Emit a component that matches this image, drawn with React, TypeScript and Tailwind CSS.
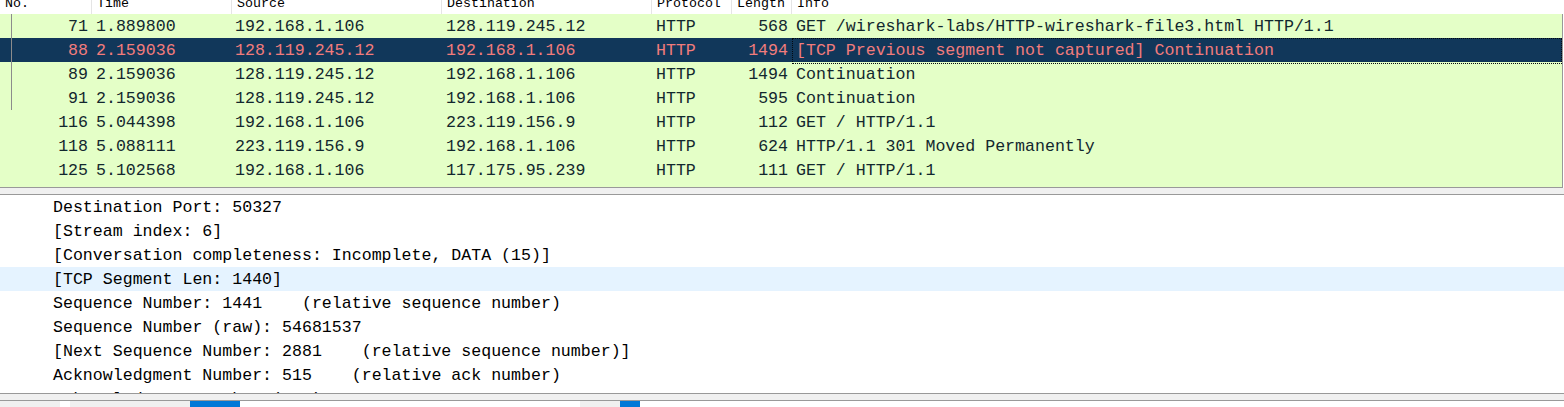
import React from 'react';

type Packet = {
  no: number;
  time: string;
  src: string;
  dst: string;
  proto: string;
  len: number;
  info: string;
  selected?: boolean;
};

const packets: Packet[] = [
  { no: 71, time: '1.889800', src: '192.168.1.106', dst: '128.119.245.12', proto: 'HTTP', len: 568, info: 'GET /wireshark-labs/HTTP-wireshark-file3.html HTTP/1.1' },
  { no: 88, time: '2.159036', src: '128.119.245.12', dst: '192.168.1.106', proto: 'HTTP', len: 1494, info: '[TCP Previous segment not captured] Continuation', selected: true },
  { no: 89, time: '2.159036', src: '128.119.245.12', dst: '192.168.1.106', proto: 'HTTP', len: 1494, info: 'Continuation' },
  { no: 91, time: '2.159036', src: '128.119.245.12', dst: '192.168.1.106', proto: 'HTTP', len: 595, info: 'Continuation' },
  { no: 116, time: '5.044398', src: '192.168.1.106', dst: '223.119.156.9', proto: 'HTTP', len: 112, info: 'GET / HTTP/1.1' },
  { no: 118, time: '5.088111', src: '223.119.156.9', dst: '192.168.1.106', proto: 'HTTP', len: 624, info: 'HTTP/1.1 301 Moved Permanently' },
  { no: 125, time: '5.102568', src: '192.168.1.106', dst: '117.175.95.239', proto: 'HTTP', len: 111, info: 'GET / HTTP/1.1' },
];

const details = [
  'Destination Port: 50327',
  '[Stream index: 6]',
  '[Conversation completeness: Incomplete, DATA (15)]',
  '[TCP Segment Len: 1440]',
  'Sequence Number: 1441    (relative sequence number)',
  'Sequence Number (raw): 54681537',
  '[Next Sequence Number: 2881    (relative sequence number)]',
  'Acknowledgment Number: 515    (relative ack number)',
  'Acknowledgment number (raw): 3014456118',
];

const cols = 'grid grid-cols-[92px_140px_210px_210px_80px_60px_1fr]';

const headers = ['No.', 'Time', 'Source', 'Destination', 'Protocol', 'Length', 'Info'];

export default function App() {
  return (
    <div className="w-[1564px] h-[407px] overflow-hidden bg-white font-['Liberation_Mono','DejaVu_Sans_Mono',monospace] text-[16.6px] leading-[24px]">
      <div className="h-[14px] w-[1563px] overflow-hidden">
        <div className={`${cols} h-[24px] -mt-[8px] text-black text-[13.3px]`}>
          {headers.map(h => (
            <div key={h} className="pl-[5px] overflow-hidden border-r border-[#e5e5e5] last:border-r-0 whitespace-pre">
              {h}
            </div>
          ))}
        </div>
      </div>

      {/* packet list */}
      <div className="relative h-[174px] w-[1563px] overflow-hidden bg-[#e4ffc7] border-b border-r border-[#999999] text-[#12272e]">
        {packets.map(p => (
          <div
            key={p.no}
            className={`${cols} h-[24px] pt-px whitespace-pre ${p.selected ? 'bg-[#11375a] text-[#f27c7c]' : ''}`}
          >
            <div className="text-right pr-[4px]">{p.no}</div>
            <div className="pl-[4px]">{p.time}</div>
            <div className="pl-[3px]">{p.src}</div>
            <div className="pl-[4px]">{p.dst}</div>
            <div className="pl-[4px]">{p.proto}</div>
            <div className="text-right pr-[4px]">{p.len}</div>
            <div className={p.selected ? 'pl-[3px] -mt-px border border-dotted border-[#050a10]' : 'pl-[4px]'}>
              {p.info}
            </div>
          </div>
        ))}
        <div className="absolute left-[11px] top-0 h-[96px] w-px bg-[#8c8c8c]" />
      </div>

      {/* splitter */}
      <div className="h-[7px] bg-[#f0f0f0] border-b border-[#999999]" />

      {/* packet details */}
      <div className="h-[198px] overflow-hidden text-black">
        {details.map((d, i) => (
          <div key={i} className={`h-[24px] pl-[48px] ${i === 3 ? 'bg-[#e5f3ff]' : ''}`}>
            <div className="pl-[5px] pt-px whitespace-pre">{d}</div>
          </div>
        ))}
      </div>

      {/* splitter */}
      <div className="h-[8px] bg-[#f0f0f0] border-y border-[#999999]" />

      {/* bytes pane, top edge */}
      <div className="flex h-[7px]">
        <div className="w-[60px] bg-[#f0f0f0]" />
        <div className="w-[10px] bg-white" />
        <div className="w-[120px] bg-[#f0f0f0]" />
        <div className="w-[50px] bg-[#0078d7]" />
        <div className="w-[340px] bg-white" />
        <div className="w-[40px] bg-[#f0f0f0]" />
        <div className="w-[20px] bg-[#0078d7]" />
        <div className="flex-1 bg-white" />
      </div>
    </div>
  );
}
